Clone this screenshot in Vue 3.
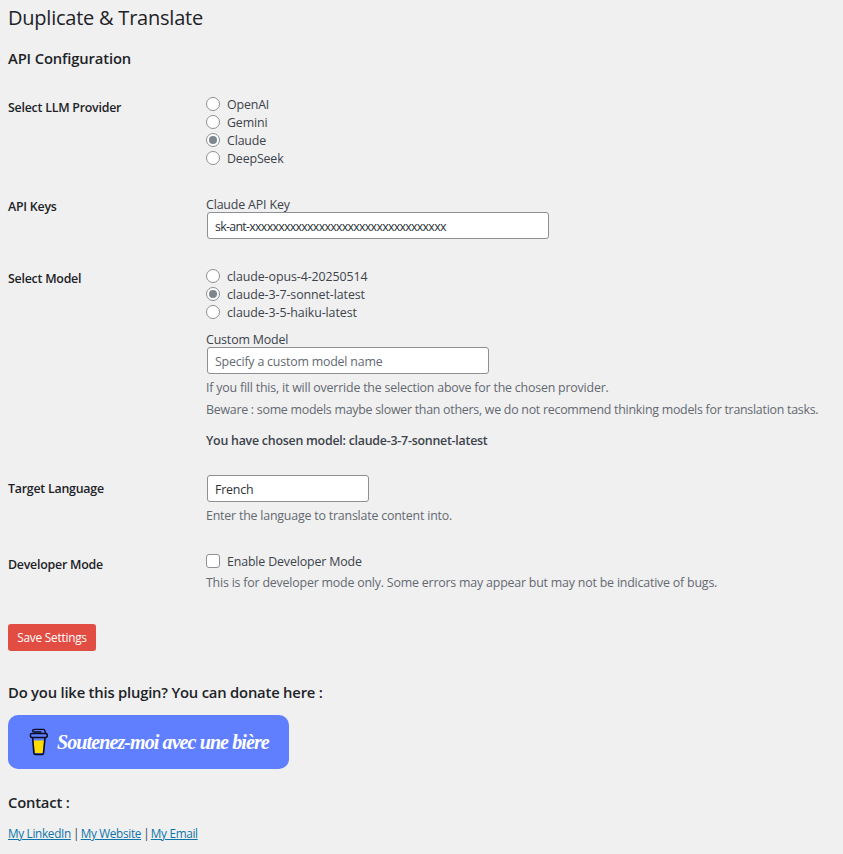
<script setup>
import { ref } from 'vue'

const providers = ['OpenAI', 'Gemini', 'Claude', 'DeepSeek']
const models = ['claude-opus-4-20250514', 'claude-3-7-sonnet-latest', 'claude-3-5-haiku-latest']
const provider = ref('Claude')
const model = ref('claude-3-7-sonnet-latest')
const apiKey = ref('sk-ant-xxxxxxxxxxxxxxxxxxxxxxxxxxxxxxxxxx')
const customModel = ref('')
const language = ref('French')
const devMode = ref(false)
</script>

<template>
  <main class="wrap">
    <h1>Duplicate &amp; Translate</h1>
    <h2 class="api">API Configuration</h2>

    <form class="form" @submit.prevent>
      <section class="row providers">
        <div class="label">Select LLM Provider</div>
        <div class="field">
          <label v-for="p in providers" :key="p" class="option">
            <input v-model="provider" type="radio" name="provider" :value="p" /><span>{{ p }}</span>
          </label>
        </div>
      </section>

      <section class="row keys">
        <div class="label">API Keys</div>
        <div class="field">
          <label class="caption" for="key">Claude API Key</label>
          <input id="key" v-model="apiKey" class="text key" type="text" />
        </div>
      </section>

      <section class="row models">
        <div class="label">Select Model</div>
        <div class="field">
          <label v-for="m in models" :key="m" class="option model">
            <input v-model="model" type="radio" name="model" :value="m" /><span>{{ m }}</span>
          </label>
          <label class="caption custom-caption" for="custom">Custom Model</label>
          <input id="custom" v-model="customModel" class="text custom" type="text" placeholder="Specify a custom model name" />
          <p class="desc">If you fill this, it will override the selection above for the chosen provider.</p>
          <p class="desc long">Beware : some models maybe slower than others, we do not recommend thinking models for translation tasks.</p>
          <p class="chosen">You have chosen model: {{ model }}</p>
        </div>
      </section>

      <section class="row language">
        <div class="label">Target Language</div>
        <div class="field">
          <input v-model="language" class="text lang" type="text" />
          <p class="desc">Enter the language to translate content into.</p>
        </div>
      </section>

      <section class="row developer">
        <div class="label">Developer Mode</div>
        <div class="field">
          <label class="option">
            <input v-model="devMode" type="checkbox" /><span>Enable Developer Mode</span>
          </label>
          <p class="desc tight">This is for developer mode only. Some errors may appear but may not be indicative of bugs.</p>
        </div>
      </section>

      <button class="save" type="submit">Save Settings</button>
    </form>

    <h2 class="donate-title">Do you like this plugin? You can donate here :</h2>
    <a class="donate">
      <svg class="cup" viewBox="0 0 20 28" width="20" height="28">
        <path d="M4.6 12.6H15.2L14.2 25H5.8Z" fill="#ffdd00" />
        <path d="M3.6 9.8 4.9 25.2Q5 26.4 6.2 26.4h7.1q1.1 0 1.2-1.2L16 9.8" fill="none" stroke="#0d0c22" stroke-width="1.6" />
        <path d="M3.1 5.4h13.5q1.7 0 1.7 2t-1.7 2.1H3.1q-1.7 0-1.7-2.1t1.7-2Z" fill="none" stroke="#0d0c22" stroke-width="1.5" />
        <path d="M16.6 5.2 15.7 2.4Q15.4 1.4 14.3 1.4H6.2Q3.6 1.4 3.6 2.7t2 1.3h6.2" fill="none" stroke="#0d0c22" stroke-width="1.4" stroke-linecap="round" />
      </svg>
      <span class="donate-text">Soutenez-moi avec une bière</span>
    </a>

    <h2 class="contact-title">Contact :</h2>
    <p class="links"><a href="#">My LinkedIn</a> | <a href="#">My Website</a> | <a href="#">My Email</a></p>
  </main>
</template>

<style>
body {
  background: #f0f0f1;
}
</style>

<style scoped>
.wrap {
  box-sizing: border-box;
  height: 854px;
  padding: 4px 8px 0;
  overflow: hidden;
  font-family: "Open Sans", "Noto Sans", sans-serif;
  font-size: 12.4px;
  line-height: 18px;
  letter-spacing: -0.15px;
  color: #3c434a;
  white-space: nowrap;
}
h1,
h2,
p {
  margin: 0;
}
h1 {
  font-size: 20px;
  font-weight: 400;
  line-height: 28px;
  color: #1d2327;
  letter-spacing: -0.23px;
}
h2 {
  font-size: 14.8px;
  font-weight: 600;
  line-height: 20px;
  color: #1d2327;
  letter-spacing: -0.2px;
}
.api {
  margin-top: 16px;
  letter-spacing: -0.14px;
}
.form {
  display: flex;
  flex-direction: column;
  align-items: flex-start;
  padding-top: 27px;
}
.row {
  display: grid;
  grid-template-columns: 198px auto;
}
.label {
  padding-top: 3px;
  font-weight: 600;
  color: #1d2327;
  letter-spacing: -0.24px;
}
.field {
  display: flex;
  flex-direction: column;
  align-items: flex-start;
}
.providers {
  height: 100px;
}
.providers .label,
.developer .label {
  padding-top: 4px;
}
.keys {
  height: 72px;
}
.models {
  height: 208px;
}
.language {
  height: 77px;
}
.developer {
  height: 72px;
}
.language .label {
  padding-top: 5px;
}
.option {
  display: flex;
  align-items: center;
  gap: 7px;
  height: 18px;
}
.option span,
.caption {
  padding-top: 2px;
}
.caption {
  line-height: 16px;
}
.option.model {
  letter-spacing: -0.08px;
}
.option input {
  appearance: none;
  box-sizing: border-box;
  display: grid;
  place-items: center;
  width: 14px;
  height: 14px;
  margin: 0;
  border: 1px solid #8c8f94;
  border-radius: 50%;
  background: #fff;
}
.option input[type="radio"]:checked::before {
  content: "";
  width: 8px;
  height: 8px;
  border-radius: 50%;
  background: #7d868e;
}
.option input[type="checkbox"] {
  border-radius: 3px;
}
.text {
  box-sizing: border-box;
  height: 27px;
  margin: -1px 0 0 1px;
  padding: 1px 7px 0;
  border: 1px solid #8c8f94;
  border-radius: 3px;
  background: #fff;
  color: #2c3338;
  font: inherit;
  letter-spacing: -0.2px;
}
.text::placeholder {
  color: #646970;
  opacity: 1;
}
.key {
  width: 342px;
  letter-spacing: -0.71px;
}
.custom {
  width: 282px;
}
.lang {
  width: 162px;
  margin-top: 0;
}
.custom-caption {
  margin-top: 9px;
}
.desc {
  margin-top: 4px;
  padding-top: 1px;
  line-height: 17px;
  color: #646970;
  letter-spacing: -0.2px;
}
.desc.long {
  letter-spacing: -0.26px;
}
.desc.tight {
  margin-top: 3px;
}
.chosen {
  margin-top: 14px;
  font-weight: 600;
  letter-spacing: -0.24px;
}
.save {
  box-sizing: border-box;
  width: 88px;
  height: 27px;
  padding: 0 0 1px;
  border: 0;
  border-radius: 3px;
  background: #e14d43;
  color: #fff;
  font: inherit;
  font-size: 11.8px;
  letter-spacing: -0.22px;
}
.donate-title {
  margin-top: 31px;
}
.donate {
  box-sizing: border-box;
  display: flex;
  align-items: center;
  width: 281px;
  height: 54px;
  margin-top: 13px;
  padding-left: 21px;
  border-radius: 10px;
  background: #5f7fff;
  color: #fff;
}
.donate-text {
  margin-left: 8px;
  font-family: "Liberation Serif", serif;
  font-size: 20px;
  font-style: italic;
  font-weight: 700;
  letter-spacing: -0.9px;
}
.contact-title {
  margin-top: 23px;
}
.links {
  margin-top: 12px;
  font-size: 11.8px;
  letter-spacing: -0.33px;
  word-spacing: -0.7px;
}
.links a {
  color: #0f74a8;
  word-spacing: 0;
  text-underline-offset: 1px;
}
.links a + a {
  margin-left: -0.5px;
}
</style>
